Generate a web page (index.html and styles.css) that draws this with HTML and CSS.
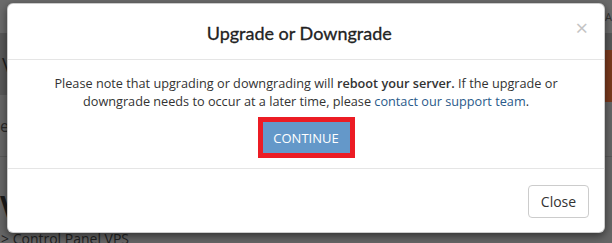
FILE: index.html
```html
<!DOCTYPE html>
<html lang="en">
<head>
    <meta charset="UTF-8" />
    <title>Upgrade or Downgrade</title>
    <link rel="stylesheet" href="styles.css">
</head>
<body>
    <!-- halaman di belakang overlay -->
    <div class="page">
        <div class="topbar"><span class="top-link">A</span></div>
        <div class="navband">
            <span class="nav-text">VPS</span>
            <span class="nav-btn"></span>
        </div>
        <div class="tabs"><span>email</span></div>
        <div class="content">
            <h2 class="page-title">VPS</h2>
            <div class="crumbs">&gt; Control Panel VPS</div>
        </div>
    </div>

    <div class="modal">
        <div class="modal-header">
            <h4 class="modal-title">Upgrade or Downgrade</h4>
            <button class="close" aria-label="Close">&times;</button>
        </div>
        <div class="modal-body">
            <p>Please note that upgrading or downgrading will <strong>reboot your server.</strong> If the upgrade or downgrade needs to occur at a later time, please <a href="#">contact our support team</a>.</p>
            <button class="btn-continue">CONTINUE</button>
        </div>
        <div class="modal-footer">
            <button class="btn-close">Close</button>
        </div>
    </div>
</body>
</html>
```

FILE: styles.css
```css
* {
    box-sizing: border-box;
}
body {
    margin: 0;
    font-family: 'Open Sans', Arial, sans-serif;
    background: #666;
    color: #1a1a1a;
    overflow: hidden;
}
/* Halaman belakang (sudah gelap karena overlay) */
.page {
    width: 612px;
    height: 243px;
}
.topbar {
    height: 33px;
    background: #6b6b6b;
    display: flex;
    justify-content: flex-end;
    align-items: center;
}
.top-link {
    font-size: 11px;
    color: #333;
    margin-right: 0;
}
.navband {
    height: 62px;
    background: #585858;
    display: flex;
    justify-content: space-between;
    align-items: center;
    padding-left: 2px;
}
.nav-text {
    font-size: 20px;
    color: #1e1e1e;
}
.nav-btn {
    width: 60px;
    height: 52px;
    margin-top: 23px;
    margin-right: -50px;
    background: #7a3a1e;
    border-radius: 4px;
}
.tabs {
    height: 62px;
    background: #666;
    border-bottom: 1px solid #595959;
    display: flex;
    align-items: center;
    font-size: 16px;
    color: #2a2a2a;
}
.page-title {
    margin: 33px 0 0;
    font-size: 30px;
    font-weight: 700;
    line-height: 34px;
    color: #1a1a1a;
}
.crumbs {
    margin-top: 5px;
    font-size: 14px;
    color: #222;
    padding-left: 1px;
}

/* Modal */
.modal {
    position: absolute;
    top: 3px;
    left: 7px;
    width: 598px;
    background: #fff;
    border: 1px solid rgba(0,0,0,0.2);
    border-radius: 6px;
    box-shadow: 0 3px 9px rgba(0,0,0,0.5);
    color: #333;
}
.modal-header {
    display: flex;
    align-items: center;
    height: 56px;
    padding: 0 15px;
    border-bottom: 1px solid #e5e5e5;
}
.modal-title {
    flex: 1;
    margin: 0;
    text-align: center;
    font-family: Lato, 'Open Sans', sans-serif;
    font-size: 18px;
    font-weight: 400;
    color: #222;
    padding-top: 2px;
    -webkit-text-stroke: 0.3px #222;
}
.close {
    background: none;
    border: none;
    padding: 0;
    margin-right: 1px;
    margin-bottom: 10px;
    font-family: 'Open Sans', Arial, sans-serif;
    font-size: 22px;
    line-height: 1;
    color: #c4c4c4;
    cursor: pointer;
}
.modal-body {
    text-align: center;
    padding: 15px 15px 10px;
    border-bottom: 1px solid #e5e5e5;
}
.modal-body p {
    margin: 0 0 7px;
    font-size: 12.7px;
    line-height: 17.5px;
}
.modal-body strong {
    font-weight: 600;
}
.modal-body a {
    color: #2a5a8a;
    text-decoration: none;
}
.btn-continue {
    font-family: 'Open Sans', Arial, sans-serif;
    font-size: 13px;
    color: #fff;
    background: #6498c9;
    background-clip: padding-box;
    border: 5px solid #ec1c24;
    padding: 0 8px;
    height: 41px;
    width: 97px;
    cursor: pointer;
}
.modal-footer {
    display: flex;
    justify-content: flex-end;
    padding: 16px 15px 14px;
}
.btn-close {
    font-family: 'Open Sans', Arial, sans-serif;
    font-size: 14px;
    color: #333;
    background: #fff;
    border: 1px solid #ccc;
    border-radius: 4px;
    width: 61px;
    height: 33px;
    padding: 0;
    cursor: pointer;
}
```
